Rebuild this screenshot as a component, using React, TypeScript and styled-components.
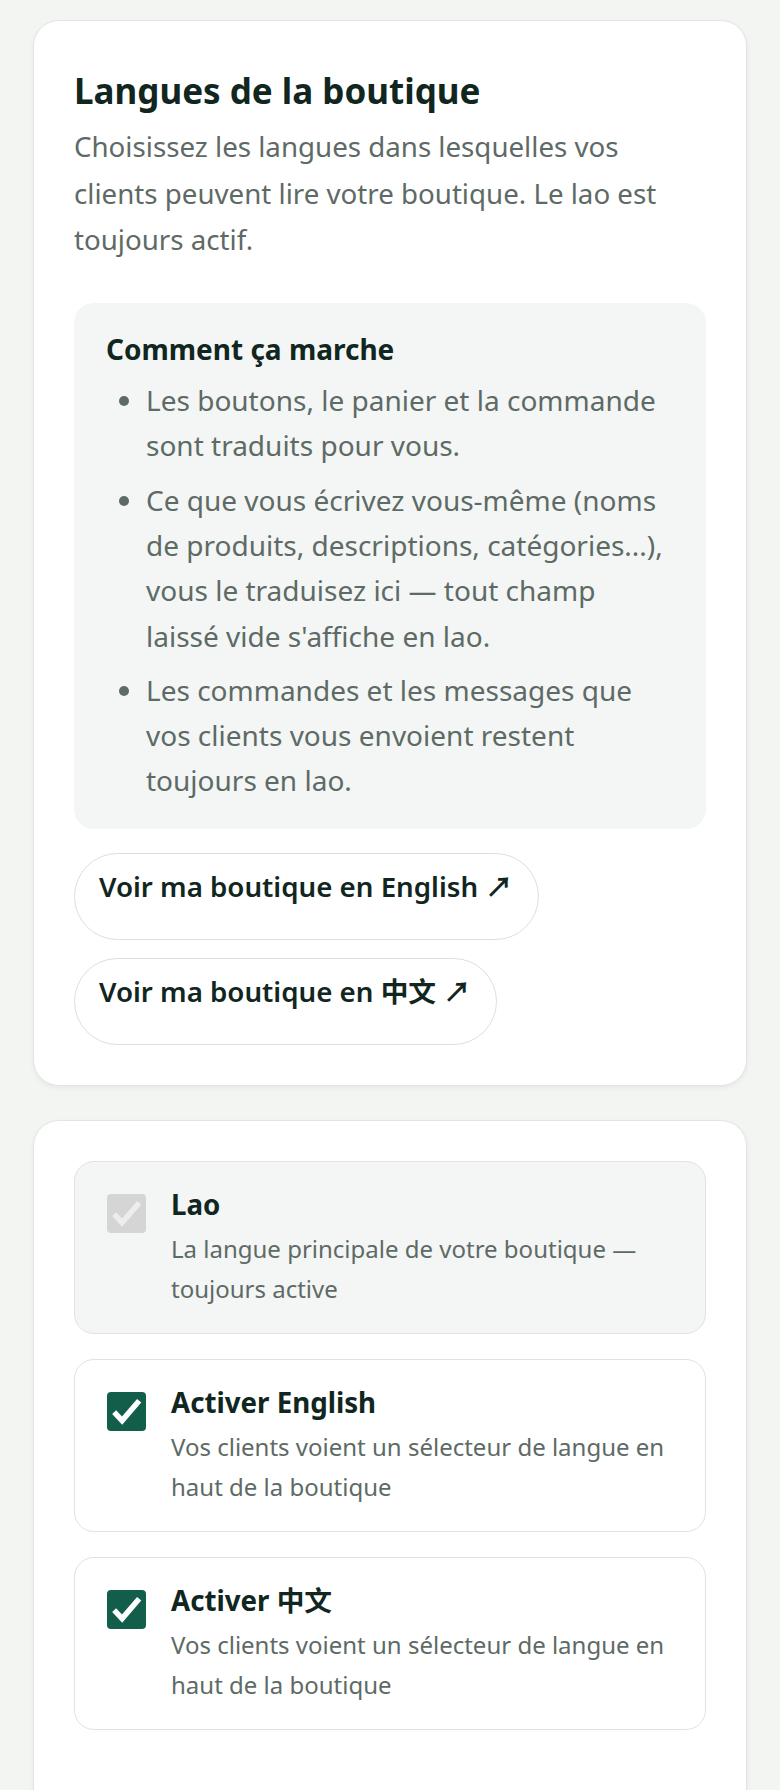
import React from "react";
import styled, { createGlobalStyle } from "styled-components";

const Global = createGlobalStyle`
  html, body { margin: 0; padding: 0; }
  body {
    background: #f3f5f3;
    font-family: "Noto Sans", "Noto Sans CJK SC", sans-serif;
    color: #11261f;
  }
`;

const Page = styled.main`
  display: flex;
  flex-direction: column;
  gap: 34px;
  padding: 20px 33px 0;
`;

const Card = styled.section<{ $tail?: number }>`
  background: #ffffff;
  border: 1px solid #e2e6e3;
  border-radius: 26px;
  box-shadow: 0 2px 5px rgba(20, 40, 30, 0.06);
  padding: 40px 40px ${(p) => p.$tail ?? 40}px;
  display: flex;
  flex-direction: column;
`;

const Title = styled.h2`
  margin: 6px 0 0;
  font-size: 35px;
  line-height: 48px;
  font-weight: 700;
  color: #11261f;
`;

const Description = styled.p`
  margin: 8px 0 0;
  font-size: 27.7px;
  line-height: 46.7px;
  color: #5e6a65;
`;

const InfoBox = styled.div`
  margin-top: 40px;
  background: #f3f6f4;
  border-radius: 20px;
  padding: 27px 32px 25px;
`;

const InfoHeading = styled.h3`
  margin: 0;
  font-size: 28px;
  line-height: 38px;
  font-weight: 700;
  color: #11261f;
`;

const List = styled.ul`
  margin: 10px 0 0;
  padding-left: 40px;
  display: flex;
  flex-direction: column;
  gap: 9px;
`;

const Item = styled.li`
  font-size: 28px;
  line-height: 45.3px;
  color: #5e6a65;
  &::marker { color: #5e6a65; }
`;

const Buttons = styled.div`
  margin-top: 24px;
  display: flex;
  flex-direction: column;
  align-items: flex-start;
  gap: 18px;
`;

const LinkButton = styled.a`
  display: inline-flex;
  align-items: flex-start;
  box-sizing: border-box;
  height: 87px;
  padding: 12px 25px 0 24px;
  border: 1px solid #dcdfdd;
  border-radius: 999px;
  background: #ffffff;
  font-size: 27.7px;
  line-height: 40px;
  font-weight: 600;
  color: #11261f;
  text-decoration: none;
  white-space: nowrap;
`;

const Options = styled.div`
  display: flex;
  flex-direction: column;
  gap: 25px;
`;

const Option = styled.label<{ $locked?: boolean }>`
  display: flex;
  align-items: flex-start;
  gap: 25px;
  padding: 24px 32px 24px;
  border: 1px solid #dfe3e1;
  border-radius: 20px;
  background: ${(p) => (p.$locked ? "#f3f6f4" : "#ffffff")};
`;

const Box = styled.span<{ $locked?: boolean }>`
  flex: none;
  width: 39px;
  height: 39px;
  margin-top: 8px;
  border-radius: 4px;
  background: ${(p) => (p.$locked ? "#d4d5d4" : "#135e4b")};
  display: flex;
`;

const OptionText = styled.span`
  display: flex;
  flex-direction: column;
  gap: 7px;
`;

const OptionLabel = styled.span`
  font-size: 27.7px;
  line-height: 36px;
  font-weight: 700;
  color: #11261f;
`;

const OptionHint = styled.span`
  font-size: 24px;
  line-height: 40px;
  color: #5e6a65;
`;

const Check = ({ color }: { color: string }) => (
  <svg width="39" height="39" viewBox="0 0 24 24" aria-hidden="true">
    <path
      d="M4.4 12.4 L9.3 17.6 L19.8 5.4"
      fill="none"
      stroke={color}
      strokeWidth="3.4"
      strokeLinecap="butt"
      strokeLinejoin="miter"
    />
  </svg>
);

const options = [
  {
    label: "Lao",
    hint: "La langue principale de votre boutique — toujours active",
    locked: true,
  },
  {
    label: "Activer English",
    hint: "Vos clients voient un sélecteur de langue en haut de la boutique",
    locked: false,
  },
  {
    label: "Activer 中文",
    hint: "Vos clients voient un sélecteur de langue en haut de la boutique",
    locked: false,
  },
];

export default function App() {
  return (
    <>
      <Global />
      <Page>
        <Card>
          <Title>Langues de la boutique</Title>
          <Description>
            Choisissez les langues dans lesquelles vos clients peuvent lire votre
            boutique. Le lao est toujours actif.
          </Description>
          <InfoBox>
            <InfoHeading>Comment ça marche</InfoHeading>
            <List>
              <Item>Les boutons, le panier et la commande sont traduits pour vous.</Item>
              <Item>
                Ce que vous écrivez vous-même (noms de produits, descriptions,
                catégories...), vous le traduisez ici — tout champ laissé vide
                s'affiche en lao.
              </Item>
              <Item>
                Les commandes et les messages que vos clients vous envoient restent
                toujours en lao.
              </Item>
            </List>
          </InfoBox>
          <Buttons>
            <LinkButton href="#">Voir ma boutique en English ↗</LinkButton>
            <LinkButton href="#">Voir ma boutique en 中文 ↗</LinkButton>
          </Buttons>
        </Card>
        <Card $tail={90}>
          <Options>
            {options.map((o) => (
              <Option key={o.label} $locked={o.locked}>
                <Box $locked={o.locked}>
                  <Check color={o.locked ? "#ededed" : "#ffffff"} />
                </Box>
                <OptionText>
                  <OptionLabel>{o.label}</OptionLabel>
                  <OptionHint>{o.hint}</OptionHint>
                </OptionText>
              </Option>
            ))}
          </Options>
        </Card>
      </Page>
    </>
  );
}
